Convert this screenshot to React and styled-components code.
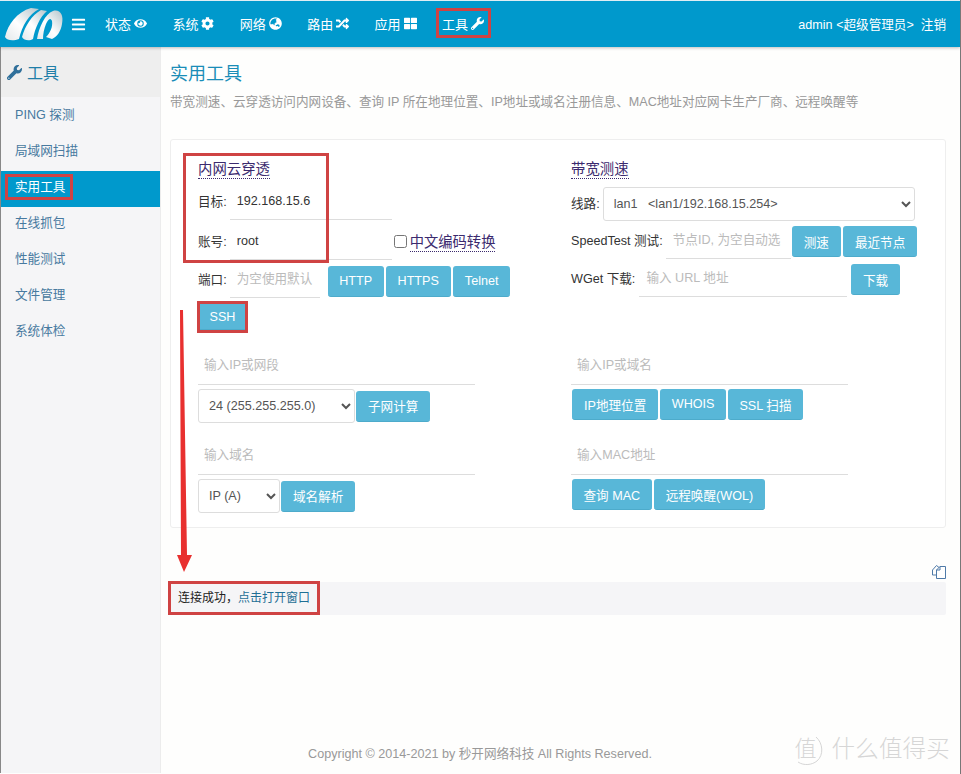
import React from 'react';
import styled, { createGlobalStyle, css } from 'styled-components';
import { FaBars, FaEye, FaCog, FaGlobeAsia, FaRandom, FaThLarge, FaWrench } from 'react-icons/fa';

const Global = createGlobalStyle`
  html, body { margin: 0; padding: 0; background: #fefefd; }
  body { font-family: "Liberation Sans", "Noto Sans CJK SC", sans-serif; font-size: 12.6px; color: #333; }
  * { box-sizing: border-box; }
`;

const markRing = css`box-shadow: 0 0 0 3px #cf4343;`;

const Page = styled.div`
  position: relative;
  width: 961px;
  height: 774px;
  overflow: hidden;
  border-right: 1px solid #777;
`;

const Header = styled.header`
  display: flex;
  align-items: center;
  height: 47px;
  border-top: 1px solid #dfeef4;
  background: #0099cc;
  box-shadow: 0 1px 3px rgba(0, 0, 0, 0.25);
  color: #fff;
  position: relative;
`;

const Logo = styled.svg`
  width: 60px;
  height: 36px;
  margin-left: 4px;
  flex: none;
`;

const Burger = styled.span`
  display: flex;
  margin: 0 19px 0 7px;
  font-size: 15px;
`;

const Nav = styled.nav`
  display: flex;
  align-items: center;
  margin-bottom: 2px;
`;

const NavItem = styled.span`
  display: flex;
  align-items: center;
  gap: 3px;
  width: 67.4px;
  height: 24px;
  font-size: 13px;
  white-space: nowrap;
  svg { font-size: 13px; }
  ${(p) => p.$marked && css`
    width: 49px;
    margin-left: -3px;
    padding-left: 3px;
    outline: 3px solid #cf4343;
  `}
`;

const User = styled.div`
  margin-left: auto;
  padding-right: 14px;
  margin-bottom: 2px;
  white-space: pre;
`;

const Body = styled.div`
  display: flex;
`;

const Sidebar = styled.aside`
  width: 161px;
  height: 726px;
  flex: none;
  background: #f5f5f7;
  border-right: 1px solid #ececec;
  border-left: 1px solid #888;
`;

const SideTitle = styled.div`
  display: flex;
  align-items: center;
  gap: 5px;
  height: 50px;
  padding-left: 6px;
  background: #eeeeee;
  color: #1f7ea8;
  font-size: 16px;
  svg { color: #2f6f9a; font-size: 15px; }
`;

const SideList = styled.ul`
  list-style: none;
  margin: 2px 0 0;
  padding: 0;
`;

const SideItem = styled.li`
  height: 36px;
  padding: 7px 0 0 14px;
  line-height: 18px;
  color: #47799f;
  ${(p) => p.$active && css`
    padding-top: 6px;
    background: #0099cc;
    color: #fff;
  `}
`;

const SideMark = styled.span`
  display: inline-block;
  padding: 0 5px 0 7px;
  margin: 0 0 0 -7px;
  line-height: 20px;
  ${markRing}
`;

const Main = styled.main`
  position: relative;
  flex: 1;
  padding: 16px 14px 0 9px;
`;

const Title = styled.h1`
  margin: 0;
  font-size: 18px;
  line-height: 22px;
  font-weight: 400;
  color: #1a8db8;
`;

const Desc = styled.p`
  margin: 7px 0 0;
  line-height: 20px;
  color: #999;
  white-space: nowrap;
`;

const Card = styled.section`
  position: relative;
  height: 389px;
  margin-top: 27px;
  padding: 19px 0 0 27px;
  border: 1px solid #eee;
  border-radius: 3px;
  background: #fff;
`;

const TopGrid = styled.div`
  display: grid;
  grid-template-columns: 373px 1fr;
  height: 190px;
`;

const Col = styled.div`
  position: relative;
  display: flex;
  flex-direction: column;
  align-items: flex-start;
`;

const BlockTitle = styled.span`
  font-size: 14.4px;
  line-height: 18px;
  margin: 1px 0 -1px;
  color: #3b2a6e;
  border-bottom: 1px dotted #3b2a6e;
`;

const Row = styled.div`
  display: flex;
  align-items: flex-start;
  margin-top: ${(p) => p.$top || 0}px;
`;

const WrapRow = styled(Row)`
  flex-wrap: wrap;
  width: 330px;
`;

const Label = styled.label`
  line-height: ${(p) => p.$lh || 36}px;
  white-space: nowrap;
`;

const Field = styled.input`
  display: block;
  width: ${(p) => p.$w}px;
  height: 36px;
  margin-left: ${(p) => p.$left || 0}px;
  padding: 0 0 1px 7px;
  border: 0;
  border-bottom: 1px solid #ddd;
  outline: none;
  background: transparent;
  font: inherit;
  color: #333;
  &::placeholder { color: #bbb; opacity: 1; }
`;

const Check = styled.label`
  display: flex;
  align-items: center;
  height: 34px;
  margin-left: 2px;
  font-size: 14.3px;
  color: #3b2a6e;
  input { width: 13px; height: 13px; margin: 0 3px 0 0; }
  span { border-bottom: 1px dotted #3b2a6e; }
`;

const Btn = styled.button`
  height: ${(p) => p.$h || 31}px;
  margin: ${(p) => p.$m || '0'};
  padding: 0 ${(p) => p.$pad || 12}px;
  border: 0;
  border-bottom: 1px solid #4dabcb;
  border-radius: ${(p) => (p.$marked ? 0 : 3)}px;
  background: #58b7d8;
  color: #fff;
  font: inherit;
  white-space: nowrap;
  ${(p) => p.$marked && markRing}
`;

const Btns = styled.div`
  display: flex;
  gap: 2px;
  margin: ${(p) => p.$m || '0'};
`;

const Frame = styled.div`
  position: absolute;
  left: -15px;
  top: -6px;
  width: 146px;
  height: 110px;
  border: 3px solid #cf4343;
  pointer-events: none;
`;

const Picker = styled.select`
  display: block;
  width: ${(p) => p.$w}px;
  height: 34px;
  margin-left: ${(p) => p.$left || 0}px;
  padding: 0 0 0 6px;
  border: 1px solid #ddd;
  border-radius: 3px;
  background: #fff;
  color: #555;
  font: inherit;
`;

const LookupGrid = styled.div`
  display: grid;
  grid-template-columns: 373px 1fr;
`;

const Lookup = styled.div`
  display: flex;
  flex-direction: column;
  align-items: flex-start;
  height: 90px;
`;

const LookupField = styled(Field)`
  padding: 0 0 4px 6px;
`;

const InlineTools = styled.div`
  display: flex;
  align-items: center;
  gap: 1px;
  margin-top: 4px;
`;

const CopyRow = styled.div`
  display: flex;
  justify-content: flex-end;
  height: 14px;
  margin-top: 37px;
  color: #4f7aa8;
`;

const Result = styled.div`
  position: relative;
  height: 33px;
  margin-top: 3px;
  padding-left: 8px;
  border-radius: 2px;
  background: #f5f5f7;
  font-size: 12px;
  line-height: 33px;
  color: #222;
  a { color: #1f6f95; text-decoration: none; }
`;

const ResultMark = styled.div`
  position: absolute;
  left: -2px;
  top: -1px;
  width: 152px;
  height: 34px;
  border: 3px solid #cf4343;
`;

const Footer = styled.footer`
  width: 620px;
  margin-top: 130px;
  line-height: 18px;
  text-align: center;
  color: #999;
`;

const Arrow = styled.svg`
  position: absolute;
  left: 170px;
  top: 305px;
  width: 30px;
  height: 270px;
`;

const Watermark = styled.div`
  position: absolute;
  right: 10px;
  bottom: 10px;
  display: flex;
  align-items: center;
  gap: 9px;
  color: #d6d6d6;
  font-size: 24px;
  font-weight: 300;
  line-height: 30px;
`;

const WmLogo = styled.span`
  position: relative;
  width: 28px;
  font-size: 22px;
  svg { position: absolute; left: -3px; top: -1px; }
`;

const WmText = styled.span`
  font-size: 23.5px;
  letter-spacing: 0.2px;
`;

const navItems = [
  ['状态', FaEye],
  ['系统', FaCog],
  ['网络', FaGlobeAsia],
  ['路由', FaRandom],
  ['应用', FaThLarge],
];

const sideItems = ['PING 探测', '局域网扫描', '实用工具', '在线抓包', '性能测试', '文件管理', '系统体检'];

const BrandLogo = () => (
  <Logo viewBox="0 0 60 36">
    <defs>
      <linearGradient id="sw" x1="0" y1="1" x2="1" y2="0">
        <stop offset="0" stopColor="#e4e9eb" />
        <stop offset="0.45" stopColor="#ffffff" />
        <stop offset="1" stopColor="#b4c5cc" />
      </linearGradient>
    </defs>
    <path d="M1 31 C4 18 13 6 27 2 L35 3 C25 8 18 20 15 33 C10 35 3 35 1 31 Z" fill="url(#sw)" />
    <path d="M18 31 C21 20 28 9 37 4 L43 5 C36 11 31 22 29 33 C26 35 20 35 18 31 Z" fill="url(#sw)" />
    <path d="M33 33 C35 21 41 8 49 5 C56 3 60 9 58 18 C57 25 53 31 48 33 L42 31 C46 27 49 21 48 15 C46 11 44 14 42 18 C40 23 39 28 39 33 Z" fill="url(#sw)" />
  </Logo>
);

export default function App() {
  return (
    <Page>
      <Global />
      <Header>
        <BrandLogo />
        <Burger><FaBars /></Burger>
        <Nav>
          {navItems.map(([name, Icon]) => (
            <NavItem key={name}>{name}<Icon /></NavItem>
          ))}
          <NavItem $marked>工具<FaWrench /></NavItem>
        </Nav>
        <User>admin &lt;超级管理员&gt;  注销</User>
      </Header>
      <Body>
        <Sidebar>
          <SideTitle><FaWrench />工具</SideTitle>
          <SideList>
            {sideItems.map((item) =>
              item === '实用工具' ? (
                <SideItem key={item} $active><SideMark>{item}</SideMark></SideItem>
              ) : (
                <SideItem key={item}>{item}</SideItem>
              )
            )}
          </SideList>
        </Sidebar>
        <Main>
          <Title>实用工具</Title>
          <Desc>带宽测速、云穿透访问内网设备、查询 IP 所在地理位置、IP地址或域名注册信息、MAC地址对应网卡生产厂商、远程唤醒等</Desc>
          <Card>
            <TopGrid>
              <Col>
                <BlockTitle>内网云穿透</BlockTitle>
                <Row $top={6}>
                  <Label>目标:</Label>
                  <Field $w={162} $left={3} defaultValue="192.168.15.6" />
                </Row>
                <Row $top={4}>
                  <Label>账号:</Label>
                  <Field $w={162} $left={3} defaultValue="root" />
                  <Check><input type="checkbox" /><span>中文编码转换</span></Check>
                </Row>
                <WrapRow $top={2}>
                  <Label>端口:</Label>
                  <Field $w={90} $left={3} placeholder="为空使用默认" />
                  <Btns $m="4px 0 0 8px">
                    <Btn $pad={11.5}>HTTP</Btn>
                    <Btn>HTTPS</Btn>
                    <Btn>Telnet</Btn>
                  </Btns>
                  <Btn $h={26} $pad={9.5} $m="6px 0 0 2px" $marked>SSH</Btn>
                </WrapRow>
                <Frame />
              </Col>
              <Col>
                <BlockTitle>带宽测速</BlockTitle>
                <Row $top={9}>
                  <Label $lh={34}>线路:</Label>
                  <Picker $w={312} $left={3}>
                    <option>lan1&nbsp;&nbsp;&nbsp;&lt;lan1/192.168.15.254&gt;</option>
                  </Picker>
                </Row>
                <Row $top={2}>
                  <Label>SpeedTest 测试:</Label>
                  <Field $w={125} $left={3} placeholder="节点ID, 为空自动选" />
                  <Btns $m="3px 0 0 1px">
                    <Btn>测速</Btn>
                    <Btn>最近节点</Btn>
                  </Btns>
                </Row>
                <Row $top={2}>
                  <Label>WGet 下载:</Label>
                  <Field $w={208} $left={4} placeholder="输入 URL 地址" />
                  <Btn $pad={11.5} $m="3px 0 0 4px">下载</Btn>
                </Row>
              </Col>
            </TopGrid>
            <LookupGrid>
              <Lookup>
                <LookupField $w={277} placeholder="输入IP或网段" />
                <InlineTools>
                  <Picker $w={157}><option>24 (255.255.255.0)</option></Picker>
                  <Btn>子网计算</Btn>
                </InlineTools>
              </Lookup>
              <Lookup>
                <LookupField $w={277} placeholder="输入IP或域名" />
                <Btns $m="4px 0 0 1px">
                  <Btn>IP地理位置</Btn>
                  <Btn $pad={11.5}>WHOIS</Btn>
                  <Btn $pad={11.5}>SSL 扫描</Btn>
                </Btns>
              </Lookup>
              <Lookup>
                <LookupField $w={277} placeholder="输入域名" />
                <InlineTools>
                  <Picker $w={82}><option>IP (A)</option></Picker>
                  <Btn>域名解析</Btn>
                </InlineTools>
              </Lookup>
              <Lookup>
                <LookupField $w={277} placeholder="输入MAC地址" />
                <Btns $m="4px 0 0 1px">
                  <Btn $pad={11.5}>查询 MAC</Btn>
                  <Btn>远程唤醒(WOL)</Btn>
                </Btns>
              </Lookup>
            </LookupGrid>
          </Card>
          <CopyRow>
            <svg width="14" height="14" viewBox="0 0 14 14" fill="none" stroke="currentColor" strokeWidth="1">
              <path d="M7 2.5 L4.5 0.5 L0.5 5 V10 H4" />
              <path d="M4.5 5 L8 1.5 H13.5 V13.5 H4.5 Z" fill="#fff" />
              <path d="M8 1.5 V5 H4.5" />
            </svg>
          </CopyRow>
          <Result>
            连接成功，<a href="#open">点击打开窗口</a>
            <ResultMark />
          </Result>
          <Footer>Copyright © 2014-2021 by 秒开网络科技 All Rights Reserved.</Footer>
        </Main>
      </Body>
      <Arrow viewBox="0 0 30 270">
        <path d="M10 5 L13 5 L17 250 L22 250 L14 267 L7 250 L11 250 Z" fill="#e8302f" />
      </Arrow>
      <Watermark>
        <WmLogo>值
          <svg width="34" height="34" viewBox="0 0 34 34" fill="none" stroke="#d6d6d6" strokeWidth="1">
            <path d="M24 4 C31 10 32 22 25 28 C20 32 12 33 6 29" />
          </svg>
        </WmLogo>
        <WmText>什么值得买</WmText>
      </Watermark>
    </Page>
  );
}
